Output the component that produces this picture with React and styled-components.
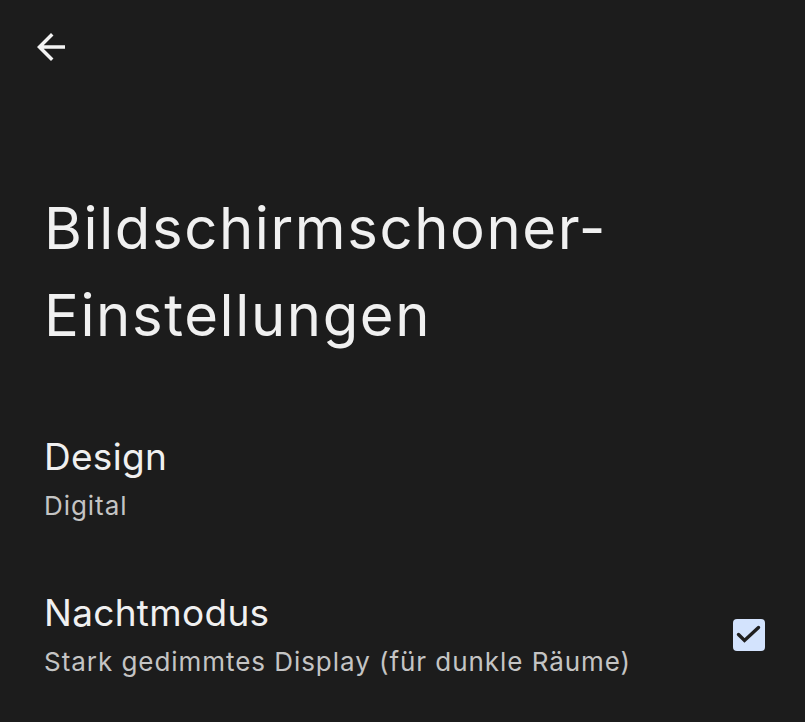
import React from "react";
import styled, { createGlobalStyle } from "styled-components";

const Global = createGlobalStyle`
  html, body { margin: 0; padding: 0; background: #1c1c1c; }
  body { font-family: Inter, Roboto, "Noto Sans", sans-serif; }
`;

const Page = styled.div`
  width: 805px;
  height: 722px;
  background: #1c1c1c;
  color: #ececec;
  display: flex;
  flex-direction: column;
  overflow: hidden;
`;

const TopBar = styled.div`
  height: 94px;
  display: flex;
  align-items: center;
  padding-left: 30px;
  box-sizing: border-box;
`;

const IconButton = styled.button`
  width: 42px;
  height: 42px;
  border: 0;
  background: transparent;
  padding: 0;
  display: flex;
  align-items: center;
  justify-content: center;
  color: #f2f2f2;
`;

const Title = styled.h1`
  margin: 91px 0 0 0;
  padding-left: 44px;
  font-size: 58px;
  line-height: 87px;
  letter-spacing: 1.6px;
  font-weight: 400;
  color: #f0f0f0;
`;

const List = styled.div`
  display: flex;
  flex-direction: column;
  gap: 67px;
  margin-top: 75px;
`;

const Row = styled.div`
  display: flex;
  align-items: center;
  justify-content: space-between;
  padding: 0 40px 0 44px;
`;

const Texts = styled.div`
  display: flex;
  flex-direction: column;
  gap: 9px;
`;

const Label = styled.div`
  font-size: 37px;
  line-height: 46px;
  letter-spacing: 0.3px;
  color: #f0f0f0;
`;

const Sub = styled.div`
  font-size: 26px;
  line-height: 34px;
  letter-spacing: 0.95px;
  color: #c4c4c4;
`;

const Check = styled.div`
  width: 32px;
  height: 32px;
  border-radius: 4px;
  background: #d3e3fd;
  display: flex;
  align-items: center;
  justify-content: center;
`;

export default function App() {
  return (
    <Page>
      <Global />
      <TopBar>
        <IconButton aria-label="Zurück">
          <svg width="42" height="42" viewBox="0 0 24 24">
            <path d="M20 11H7.83l5.59-5.59L12 4l-8 8 8 8 1.41-1.41L7.83 13H20v-2z" fill="#f2f2f2" />
          </svg>
        </IconButton>
      </TopBar>
      <Title>
        Bildschirmschoner-
        <br />
        Einstellungen
      </Title>
      <List>
        <Row>
          <Texts>
            <Label>Design</Label>
            <Sub>Digital</Sub>
          </Texts>
        </Row>
        <Row>
          <Texts>
            <Label>Nachtmodus</Label>
            <Sub>Stark gedimmtes Display (für dunkle Räume)</Sub>
          </Texts>
          <Check>
            <svg width="32" height="32" viewBox="0 0 32 32" fill="none">
              <path d="M5.5 15.5L11.5 21.5L25.5 8.5" stroke="#1f1f1f" strokeWidth="3.4" strokeLinecap="round" strokeLinejoin="miter" />
            </svg>
          </Check>
        </Row>
      </List>
    </Page>
  );
}
